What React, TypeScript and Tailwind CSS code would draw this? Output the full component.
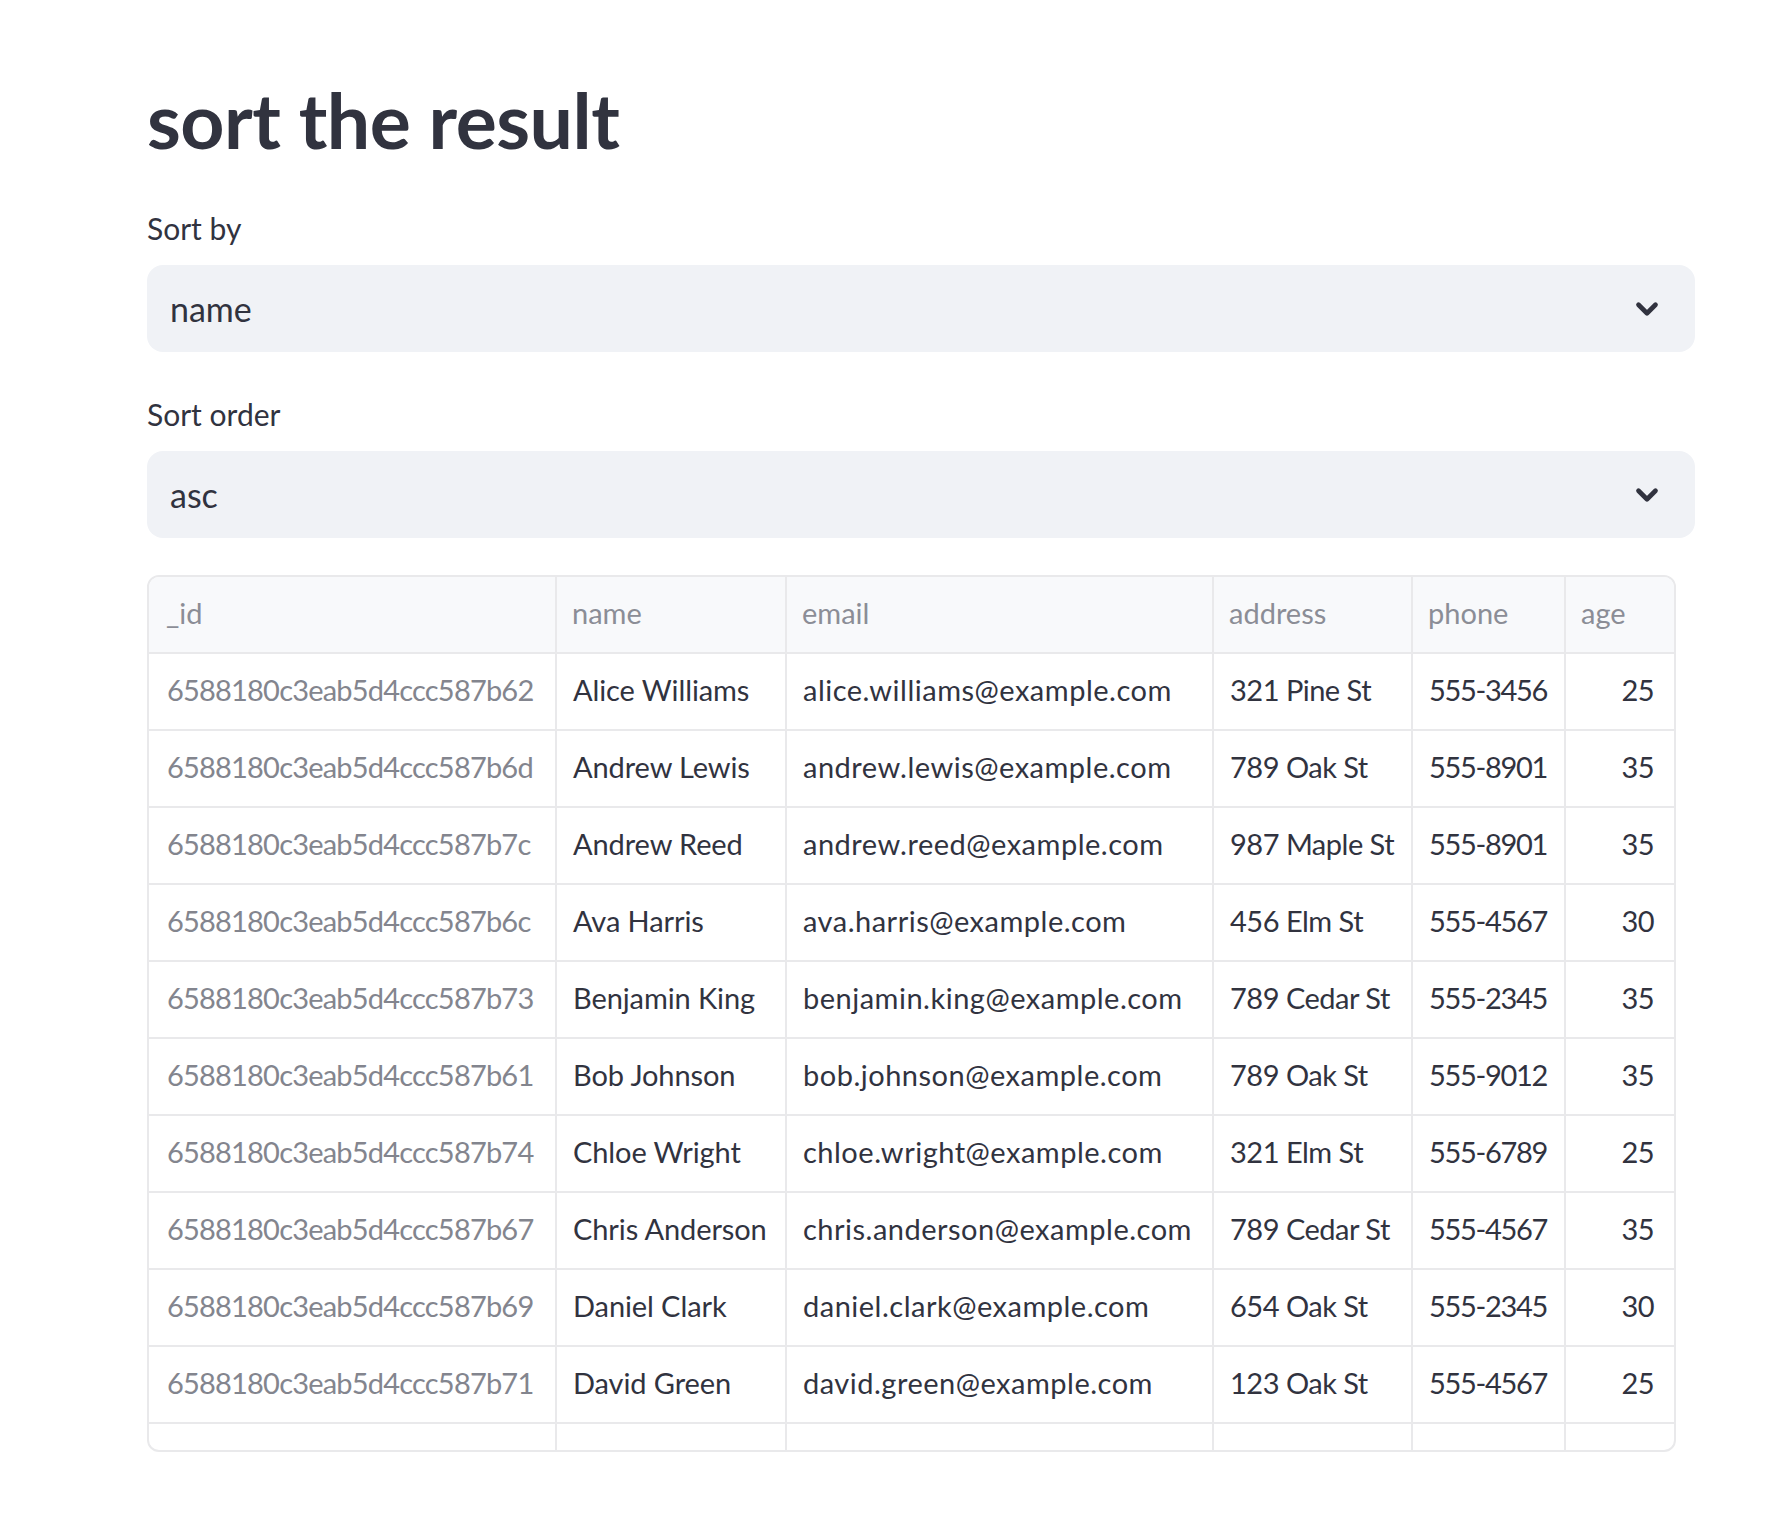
import { ChevronDown } from "lucide-react";

type Row = {
  id: string;
  name: string;
  email: string;
  address: string;
  phone: string;
  age: number;
};

const rows: Row[] = [
  { id: "6588180c3eab5d4ccc587b62", name: "Alice Williams", email: "alice.williams@example.com", address: "321 Pine St", phone: "555-3456", age: 25 },
  { id: "6588180c3eab5d4ccc587b6d", name: "Andrew Lewis", email: "andrew.lewis@example.com", address: "789 Oak St", phone: "555-8901", age: 35 },
  { id: "6588180c3eab5d4ccc587b7c", name: "Andrew Reed", email: "andrew.reed@example.com", address: "987 Maple St", phone: "555-8901", age: 35 },
  { id: "6588180c3eab5d4ccc587b6c", name: "Ava Harris", email: "ava.harris@example.com", address: "456 Elm St", phone: "555-4567", age: 30 },
  { id: "6588180c3eab5d4ccc587b73", name: "Benjamin King", email: "benjamin.king@example.com", address: "789 Cedar St", phone: "555-2345", age: 35 },
  { id: "6588180c3eab5d4ccc587b61", name: "Bob Johnson", email: "bob.johnson@example.com", address: "789 Oak St", phone: "555-9012", age: 35 },
  { id: "6588180c3eab5d4ccc587b74", name: "Chloe Wright", email: "chloe.wright@example.com", address: "321 Elm St", phone: "555-6789", age: 25 },
  { id: "6588180c3eab5d4ccc587b67", name: "Chris Anderson", email: "chris.anderson@example.com", address: "789 Cedar St", phone: "555-4567", age: 35 },
  { id: "6588180c3eab5d4ccc587b69", name: "Daniel Clark", email: "daniel.clark@example.com", address: "654 Oak St", phone: "555-2345", age: 30 },
  { id: "6588180c3eab5d4ccc587b71", name: "David Green", email: "david.green@example.com", address: "123 Oak St", phone: "555-4567", age: 25 },
  { id: "6588180c3eab5d4ccc587b6b", name: "Emily Taylor", email: "emily.taylor@example.com", address: "654 Birch St", phone: "555-7890", age: 28 },
];

function Select({ label, value }: { label: string; value: string }) {
  return (
    <div>
      <div className="h-[36px] text-[30px] leading-[36px]">{label}</div>
      <div className="mt-[19px] h-[87px] flex items-center justify-between pl-[23px] pr-[31px] rounded-[16px] bg-[#f0f2f6]">
        <span className="text-[34px]">{value}</span>
        <ChevronDown size={34} strokeWidth={3.3} className="text-[#31333f]" />
      </div>
    </div>
  );
}

const cell = "h-[77px] flex items-center border-b-2 border-[#e9e9eb] truncate pb-[3px]";

export default function App() {
  return (
    <div className="min-h-screen bg-white text-[#31333f]" style={{ fontFamily: "Lato, 'Noto Sans', sans-serif" }}>
      <div className="w-[1548px] ml-[147px] pt-[82px] pb-[60px]">
        <h2 className="h-[74px] text-[77px] leading-[74px] font-bold tracking-[-0.5px]">sort the result</h2>

        <div className="mt-[54px]">
          <Select label="Sort by" value="name" />
        </div>
        <div className="mt-[44px]">
          <Select label="Sort order" value="asc" />
        </div>

        <div className="mt-[37px] w-[1529px] h-[877px] border-2 border-[#e9e9eb] rounded-[12px] overflow-hidden">
          <div className="grid grid-cols-[408px_230px_427px_199px_153px_108px] text-[29px]">
            {["_id", "name", "email", "address", "phone", "age"].map((h, i) => (
              <div
                key={h}
                className={`${cell} bg-[#f8f9fb] text-[#8b8d96] ${i === 0 ? "pl-[17px]" : "pl-[15px]"} ${i < 5 ? "border-r-2" : ""}`}
              >
                {h}
              </div>
            ))}
            {rows.map((r) => (
              <div key={r.id} className="contents">
                <div className={`${cell} border-r-2 pl-[18px] text-[#83858e] tracking-[-0.8px]`}>{r.id}</div>
                <div className={`${cell} border-r-2 pl-[16px] tracking-[-0.1px]`}>{r.name}</div>
                <div className={`${cell} border-r-2 pl-[16px] tracking-[0.5px]`}>{r.email}</div>
                <div className={`${cell} border-r-2 pl-[16px] tracking-[-0.5px]`}>{r.address}</div>
                <div className={`${cell} border-r-2 pl-[16px] tracking-[-1.3px]`}>{r.phone}</div>
                <div className={`${cell} justify-end pr-[20px] tracking-[-0.6px]`}>{r.age}</div>
              </div>
            ))}
          </div>
        </div>
      </div>
    </div>
  );
}
